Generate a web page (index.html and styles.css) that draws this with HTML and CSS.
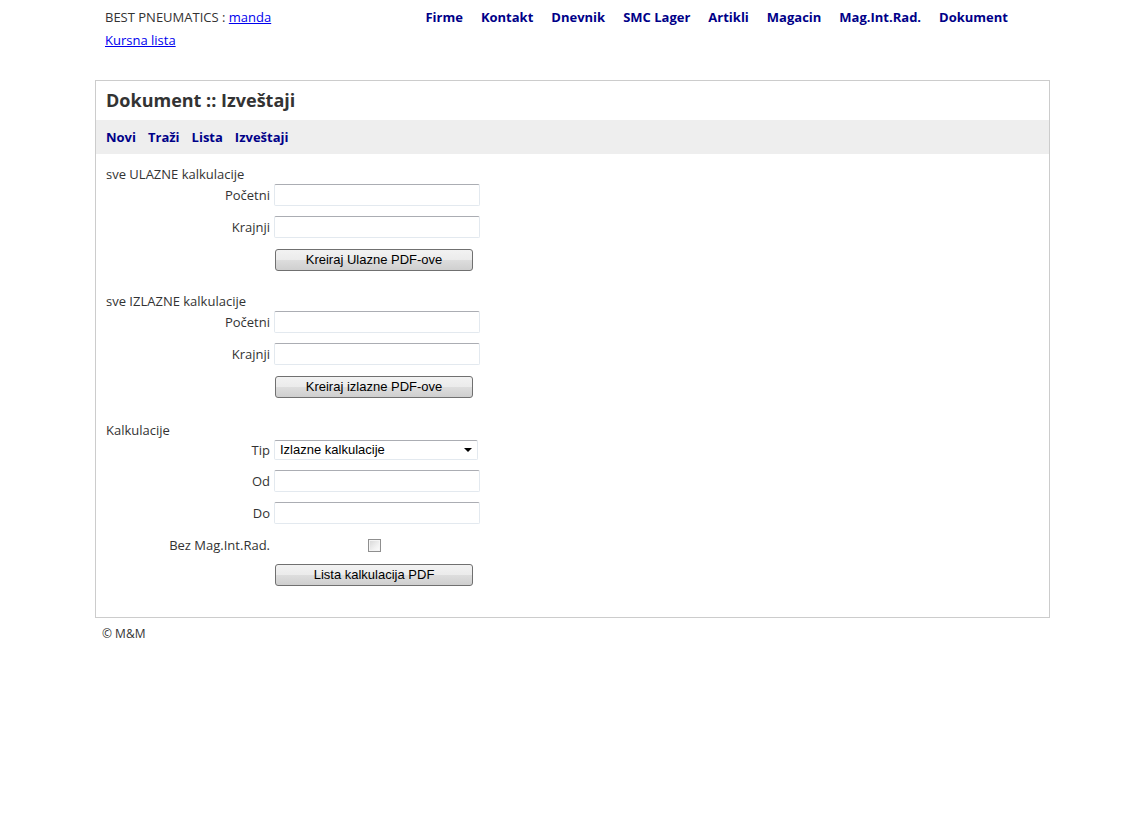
FILE: index.html
```html
<!DOCTYPE html>
<html lang="sr">
<head>
<meta charset="utf-8">
<title>Dokument :: Izveštaji</title>
<link rel="stylesheet" href="styles.css">
</head>
<body>
<div class="page">
  <header class="top">
    <div class="user">
      <div class="user-line">BEST PNEUMATICS : <a href="#">manda</a></div>
      <div class="user-line"><a href="#">Kursna lista</a></div>
    </div>
    <nav class="main-nav">
      <a href="#">Firme</a>
      <a href="#">Kontakt</a>
      <a href="#">Dnevnik</a>
      <a href="#">SMC Lager</a>
      <a href="#">Artikli</a>
      <a href="#">Magacin</a>
      <a href="#">Mag.Int.Rad.</a>
      <a href="#">Dokument</a>
    </nav>
  </header>

  <main class="box">
    <h1 class="box-title">Dokument :: Izveštaji</h1>
    <nav class="sub-nav">
      <a href="#">Novi</a>
      <a href="#">Traži</a>
      <a href="#">Lista</a>
      <a href="#">Izveštaji</a>
    </nav>

    <form class="form">
      <section class="section">
        <div class="section-title">sve ULAZNE kalkulacije</div>
        <div class="row first">
          <label class="label">Početni</label>
          <input class="text" type="text">
        </div>
        <div class="row">
          <label class="label">Krajnji</label>
          <input class="text" type="text">
        </div>
        <div class="row btn-row">
          <span class="label"></span>
          <button type="button" class="btn">Kreiraj Ulazne PDF-ove</button>
        </div>
      </section>

      <section class="section">
        <div class="section-title">sve IZLAZNE kalkulacije</div>
        <div class="row first">
          <label class="label">Početni</label>
          <input class="text" type="text">
        </div>
        <div class="row">
          <label class="label">Krajnji</label>
          <input class="text" type="text">
        </div>
        <div class="row btn-row">
          <span class="label"></span>
          <button type="button" class="btn">Kreiraj izlazne PDF-ove</button>
        </div>
      </section>

      <section class="section section-wide">
        <div class="section-title">Kalkulacije</div>
        <div class="row first">
          <label class="label">Tip</label>
          <div class="select-wrap">
            <select class="select">
              <option>Izlazne kalkulacije</option>
              <option>Ulazne kalkulacije</option>
            </select>
          </div>
        </div>
        <div class="row">
          <label class="label">Od</label>
          <input class="text" type="text">
        </div>
        <div class="row">
          <label class="label">Do</label>
          <input class="text" type="text">
        </div>
        <div class="row check-row">
          <label class="label">Bez Mag.Int.Rad.</label>
          <input class="check" type="checkbox">
        </div>
        <div class="row btn-row btn-row-last">
          <span class="label"></span>
          <button type="button" class="btn">Lista kalkulacija PDF</button>
        </div>
      </section>
    </form>
  </main>

  <footer class="footer">© M&amp;M</footer>
</div>
</body>
</html>
```

FILE: styles.css
```css
html, body {
  margin: 0;
  padding: 0;
  background: #ffffff;
}

body {
  font-family: "Open Sans", "DejaVu Sans", sans-serif;
  font-size: 13px;
  color: #333333;
}

.page {
  width: 955px;
  margin-left: 95px;
}

.top {
  display: flex;
  align-items: flex-start;
  padding-top: 6px;
  height: 80px;
  box-sizing: border-box;
}

.user {
  padding-left: 10px;
}

.user-line {
  line-height: 23px;
}

.user a {
  color: #0000ee;
  text-decoration: underline;
}

.main-nav {
  margin-left: auto;
  margin-right: 42px;
  display: flex;
  gap: 18px;
  line-height: 23px;
}

.main-nav a,
.sub-nav a {
  color: #000088;
  font-weight: bold;
  text-decoration: none;
}

.box {
  display: block;
  border: 1px solid #cccccc;
}

.box-title {
  margin: 0;
  padding: 0 10px;
  height: 39px;
  line-height: 39px;
  font-size: 18px;
  font-weight: bold;
  color: #333333;
}

.sub-nav {
  background: #eeeeee;
  height: 34px;
  padding: 0 10px;
  display: flex;
  align-items: center;
  gap: 12px;
}

.form {
  padding: 12px 10px 31px 10px;
  margin: 0;
}

.section + .section {
  margin-top: 22px;
}

.section + .section-wide {
  margin-top: 24px;
}

.section-title {
  line-height: 16px;
}

.row {
  display: grid;
  grid-template-columns: 164px 206px;
  column-gap: 4px;
  align-items: center;
  margin-top: 10px;
}

.row.first {
  margin-top: 2px;
}

.row.btn-row {
  margin-top: 11px;
}

.row.btn-row-last {
  margin-top: 8px;
}

.label {
  text-align: right;
  line-height: 16px;
}

.text {
  box-sizing: border-box;
  width: 206px;
  height: 22px;
  margin: 0;
  padding: 2px 3px;
  border: 1px solid #e3e9ef;
  border-top-color: #abadb3;
  border-radius: 2px;
  background: #ffffff;
  font-family: "Liberation Sans", Arial, sans-serif;
  font-size: 13px;
}

.btn {
  box-sizing: border-box;
  width: 198px;
  height: 22px;
  margin: 0 0 0 1px;
  padding: 0;
  border: 1px solid #707070;
  border-radius: 3px;
  background: linear-gradient(to bottom, #f2f2f2 0%, #ebebeb 50%, #dddddd 51%, #cfcfcf 100%);
  font-family: "Liberation Sans", Arial, sans-serif;
  font-size: 13px;
  color: #000000;
  line-height: 18px;
}

.select-wrap {
  position: relative;
  width: 204px;
  height: 20px;
}

.select {
  -webkit-appearance: none;
  appearance: none;
  box-sizing: border-box;
  width: 204px;
  height: 20px;
  margin: 0;
  padding: 0 0 0 5px;
  border: 1px solid #e3e9ef;
  border-top-color: #abadb3;
  border-radius: 2px;
  background: #ffffff;
  font-family: "Liberation Sans", Arial, sans-serif;
  font-size: 13px;
  color: #000000;
  line-height: 18px;
}

.select-wrap::after {
  content: "";
  position: absolute;
  right: 6px;
  top: 8px;
  width: 0;
  height: 0;
  border-left: 4px solid transparent;
  border-right: 4px solid transparent;
  border-top: 4px solid #000000;
  pointer-events: none;
}

.row.check-row {
  margin-top: 10px;
  height: 22px;
}

.check {
  -webkit-appearance: none;
  appearance: none;
  box-sizing: border-box;
  width: 13px;
  height: 13px;
  margin: 0 0 0 94px;
  border: 1px solid #8f8f8f;
  box-shadow: inset 0 0 0 1px #f4f4f4;
  background: linear-gradient(135deg, #d6d6d6 0%, #f0f0f0 60%, #fdfdfd 100%);
}

.footer {
  padding: 8px 0 0 7px;
  line-height: 16px;
  font-size: 12px;
}
```
